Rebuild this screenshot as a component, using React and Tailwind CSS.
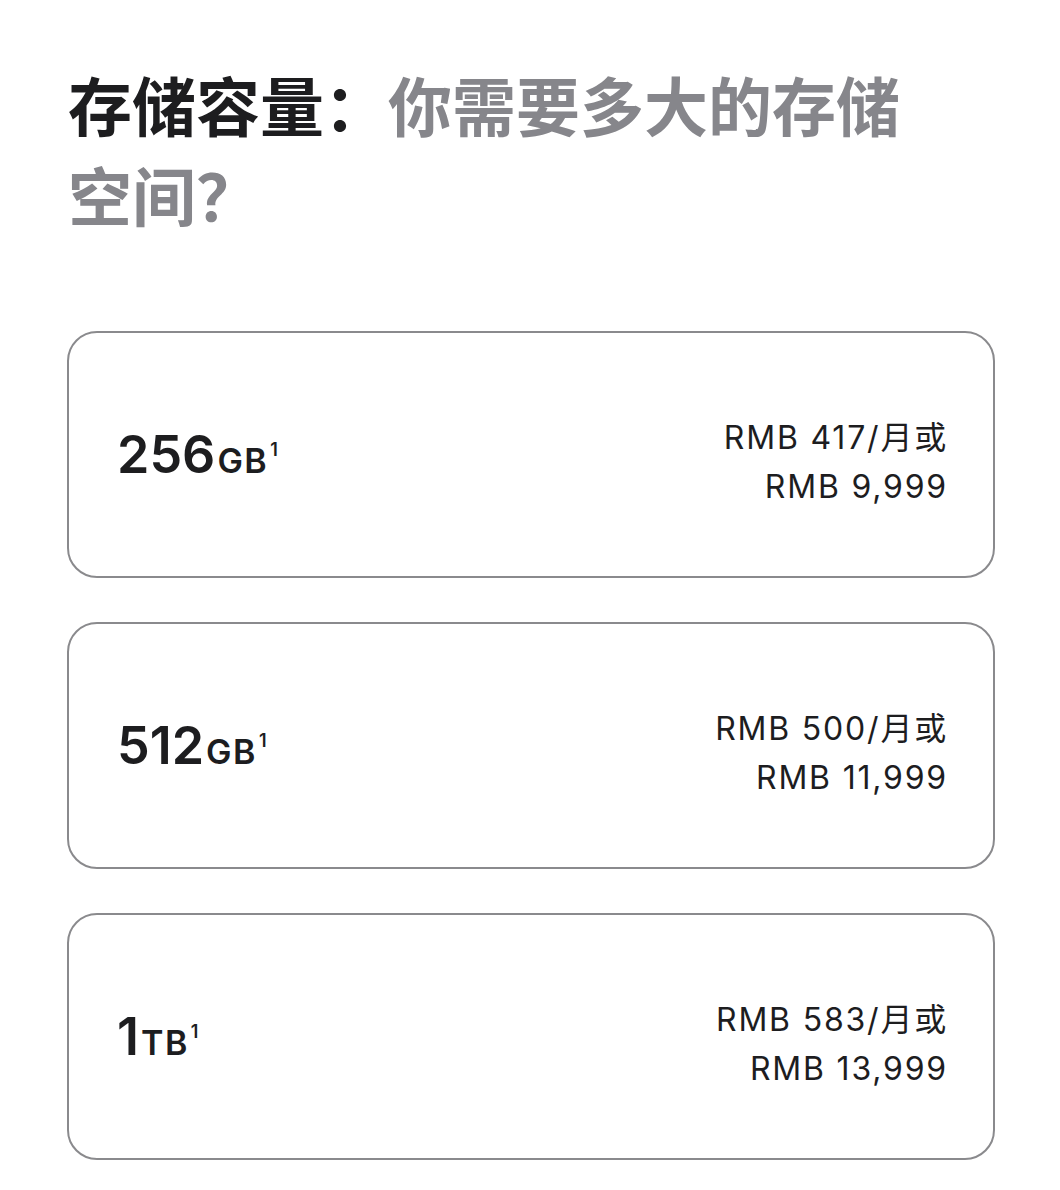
import React from 'react';

const options = [
  { size: '256', unit: 'GB', monthly: 'RMB 417/月或', total: 'RMB 9,999' },
  { size: '512', unit: 'GB', monthly: 'RMB 500/月或', total: 'RMB 11,999' },
  { size: '1', unit: 'TB', monthly: 'RMB 583/月或', total: 'RMB 13,999' },
];

const font = 'font-["Inter","Noto_Sans_CJK_SC",sans-serif]';

const App = () => {
  return (
    <div className={`min-h-[1190px] w-[1060px] bg-white text-[#1d1d1f] ${font}`}>
      <div className="pl-[67px] pr-[65px] pt-[63px]">
        <h2 className="max-w-[870px] pl-[1px] text-[64px] font-semibold leading-[90px]">
          存储容量：<span className="text-[#86868b]">你需要多大的存储空间？</span>
        </h2>

        <div className="mt-[88px] flex flex-col gap-[44px]">
          {options.map((opt) => (
            <div
              key={opt.size}
              className="flex h-[247px] items-center justify-between rounded-[30px] border-2 border-[#8a8a8d] pl-[48px] pr-[45px]"
            >
              <div className="font-semibold leading-none">
                <span className="text-[52px]">{opt.size}</span>
                <span className="ml-[2px] text-[34px] tracking-[1.5px]">{opt.unit}</span>
                <sup className="top-[-17px] ml-[2px] text-[18px]">1</sup>
              </div>
              <div className="pt-[14px] text-right text-[32px] leading-[49px] tracking-[1.8px]">
                <div>{opt.monthly}</div>
                <div>{opt.total}</div>
              </div>
            </div>
          ))}
        </div>
      </div>
    </div>
  );
};

export default App;
